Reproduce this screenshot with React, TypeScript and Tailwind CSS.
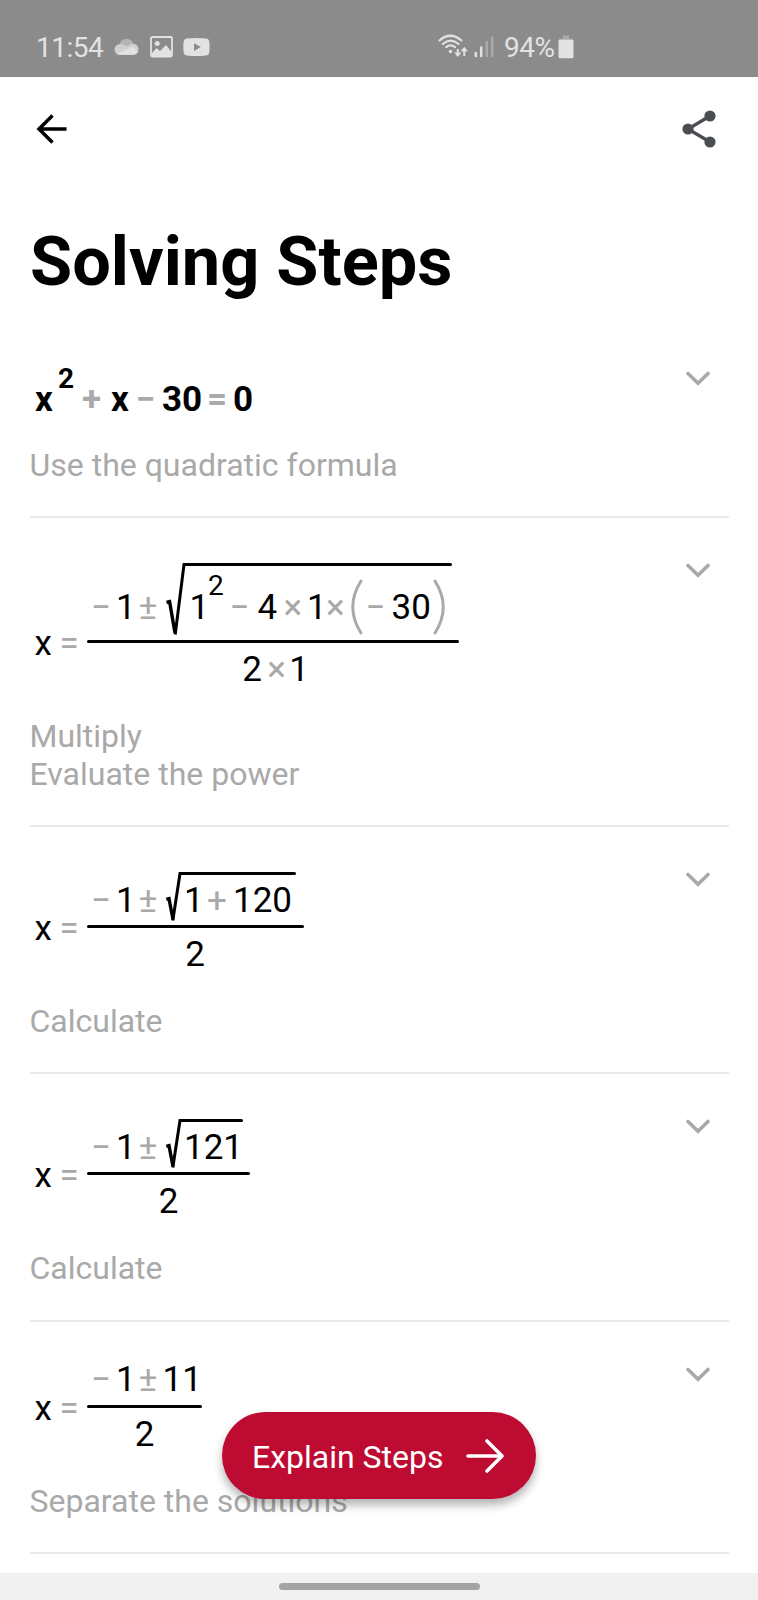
import React from 'react';

type SlotProps = { className?: string; children?: React.ReactNode };

// Number or variable
const Num: React.FC<SlotProps> = ({ className = '', children }) => (
  <span className={`shrink-0 whitespace-nowrap ${className}`}>{children}</span>
);

// Operator, drawn in grey
const Op: React.FC<SlotProps> = ({ className = '', children }) => (
  <span className={`shrink-0 whitespace-nowrap text-[#a9a9a9] ${className}`}>{children}</span>
);

const Chevron = () => (
  <svg className="mt-[9px] mr-[19px] h-4 w-6 shrink-0" viewBox="0 0 24 16" fill="none">
    <path d="M2 2.5L12 12.3L22 2.5" stroke="#a9a9a9" strokeWidth="3.6" strokeLinecap="round" />
  </svg>
);

const Root: React.FC<{ tall?: boolean; children: React.ReactNode }> = ({ tall, children }) => (
  <div className="flex">
    {tall ? (
      <svg className="h-[74px] w-[18px] shrink-0 overflow-visible" viewBox="0 0 18 74" fill="none" stroke="#000">
        <path d="M0.5 39.5L3.6 38.6L9 70" strokeWidth="3.4" />
        <path d="M9.2 71.5L18 1.5H20" strokeWidth="3" />
      </svg>
    ) : (
      <svg className="h-[50px] w-[14px] shrink-0 overflow-visible" viewBox="0 0 14 50" fill="none" stroke="#000">
        <path d="M0.3 27.3L3 26.6L7 47.5" strokeWidth="3.4" />
        <path d="M6.8 48.5L14 1.5H16" strokeWidth="3" />
      </svg>
    )}
    <div>
      <div className="h-[3px] rounded-r-full bg-black" />
      {children}
    </div>
  </div>
);

const Fraction: React.FC<{ className: string; top: React.ReactNode; bottom: React.ReactNode }> = ({
  className,
  top,
  bottom,
}) => (
  <div className="flex items-end">
    <div className="mb-[26px] flex pl-[4.5px]">
      <Num className="w-[25px]">x</Num>
      <Op className="w-[27.5px]">=</Op>
    </div>
    <div className={className}>
      {top}
      <div className="h-[3px] rounded-full bg-black" />
      <div className="mt-[6px] flex justify-center">{bottom}</div>
    </div>
  </div>
);

type StepProps = { formula: React.ReactNode; notes: string[]; className?: string };

const Step: React.FC<StepProps> = ({ formula, notes, className = 'pt-[36px] pb-[32.25px]' }) => (
  <section className={`border-b-2 border-[#e9e9e9] ${className}`}>
    <div className="flex items-start justify-between">
      <div className="text-[35px] leading-[41px] text-black">{formula}</div>
      <Chevron />
    </div>
    <div className="mt-[27px] -ml-[0.5px] text-[32px] leading-[38px] text-[#a9a9a9]">
      {notes.map((note) => (
        <p key={note}>{note}</p>
      ))}
    </div>
  </section>
);

const StatusBar = () => (
  <header className="flex h-[77px] items-start bg-[#8b8b8b] pt-[32px] text-[28px] leading-[32px] text-[#e2e2e2]">
    <span className="ml-[36px] w-[78px] tracking-[-0.5px]">11:54</span>
    <svg className="mt-[6px] h-[18px] w-[25px]" viewBox="0 0 25 18">
      <circle cx="12.5" cy="8" r="7.3" fill="#b5b5b5" />
      <path
        d="M6 6.3C9 6.3 10 7 12.5 8.5C15 7 17 5.8 19 5.8C22.5 6 24.5 8.5 24.5 11.5C24.5 14.5 22 16.8 19 16.8H6C3 16.8 .5 14.5 .5 11.5C.5 8.5 3 6.3 6 6.3Z"
        fill="#d0d0d0"
      />
      <path d="M3 15.8L19 8.5L24 14Q22 16.8 19 16.8H6Q4.3 16.8 3 15.8Z" fill="#e2e2e2" />
    </svg>
    <svg className="ml-[11px] mt-[4px] h-[22px] w-[23px]" viewBox="0 0 23 22">
      <rect x="1" y="1" width="21" height="19.5" rx="1.5" fill="none" stroke="#e2e2e2" strokeWidth="1.8" />
      <circle cx="7.2" cy="7.5" r="2.5" fill="#e2e2e2" />
      <path d="M2 17L6.5 12L10 15L16 9L21 15V20H2Z" fill="#e2e2e2" />
    </svg>
    <svg className="ml-[10px] mt-[6px] h-[19px] w-[27px]" viewBox="0 0 27 19">
      <path
        fillRule="evenodd"
        d="M4 .5Q13.5 -.5 23 .5Q26 .8 26.3 4Q26.8 9 26.3 14Q26 17.2 23 17.6Q13.5 18.6 4 17.6Q1 17.2 .6 14Q.1 9 .6 4Q1 .8 4 .5ZM11 5.2V13L17.8 9.1Z"
        fill="#e2e2e2"
      />
    </svg>
    <svg className="ml-[228px] mt-[2px] h-[24px] w-[30px]" viewBox="0 0 30 24" fill="none" stroke="#e2e2e2">
      <g strokeWidth="2.2" strokeLinecap="round">
        <path d="M1.5 6.5Q12 -3 23.5 6.5" />
        <path d="M4.8 10Q12.5 3.3 20.5 10" />
        <path d="M8.2 13.2Q12.5 9.7 17 13.2" />
      </g>
      <circle cx="12.5" cy="17.5" r="1.8" fill="#e2e2e2" stroke="none" />
      <path d="M19.8 15V20.5M26.3 15.5V22" strokeWidth="2" />
      <path d="M16.2 18.5H23.4L19.8 23ZM22.7 17.2H29.9L26.3 12.8Z" fill="#e2e2e2" stroke="none" />
    </svg>
    <svg className="ml-[6px] mt-[4px] h-[22px] w-[20px]" viewBox="0 0 20 22" strokeWidth="2.5" strokeLinecap="round">
      <path d="M1.8 17V20M7.2 11.5V20" stroke="#e2e2e2" />
      <path d="M12.8 6V20M18.2 1.5V20" stroke="#ababab" />
    </svg>
    <span className="ml-[10px] w-[54px] whitespace-nowrap tracking-[-0.5px]">94%</span>
    <svg className="mt-[3px] h-[24px] w-[16px]" viewBox="0 0 16 24">
      <path d="M5 0.5H11V3.5H15V6H1V3.5H5Z" fill="#ababab" />
      <rect x="0.5" y="4.8" width="15" height="18.5" rx="1.5" fill="#e2e2e2" />
    </svg>
  </header>
);

const minusOne = (
  <>
    <Op className="ml-[4px] w-[25px]">−</Op>
    <Num className="w-[22.5px]">1</Num>
  </>
);

export default function App() {
  return (
    <div className="relative flex h-[1600px] w-[758px] flex-col overflow-hidden bg-white font-['Roboto',sans-serif]">
      <StatusBar />

      <nav className="flex h-[104px] items-center justify-between pl-[36px] pr-[42px]">
        <svg className="h-8 w-8" viewBox="0 0 32 32" fill="none" stroke="#000" strokeWidth="3.5">
          <path d="M30.5 16H3M16.5 2.5L3 16L16.5 29.5" />
        </svg>
        <svg className="h-[38px] w-[34px]" viewBox="0 0 34 38" fill="#4a4d52">
          <path d="M28 6L6 19L28 32" fill="none" stroke="#4a4d52" strokeWidth="3.3" />
          <circle cx="28" cy="6" r="5.6" />
          <circle cx="6" cy="19" r="5.6" />
          <circle cx="28" cy="32" r="5.6" />
        </svg>
      </nav>

      <main className="flex-1 pl-[30px] pr-[29px]">
        <h1 className="mt-[40px] text-[68.5px] leading-[82px] font-bold text-black">Solving Steps</h1>

        <Step
          className="pt-[58.5px] pb-[32.25px]"
          notes={['Use the quadratic formula']}
          formula={
            <div className="-mb-px flex pt-[17px] pl-[5px] font-bold">
              <Num className="w-[23px]">x</Num>
              <Num className="-mt-[17px] w-[24px] text-[28px] leading-[33px]">2</Num>
              <Op className="w-[29px]">+</Op>
              <Num className="w-[25px]">x</Num>
              <Op className="w-[26px]">−</Op>
              <Num className="w-[45px]">30</Num>
              <Op className="w-[26px]">=</Op>
              <Num>0</Num>
            </div>
          }
        />

        <Step
          notes={['Multiply', 'Evaluate the power']}
          formula={
            <Fraction
              className="w-[372px]"
              top={
                <div className="flex h-[86px] items-start">
                  <div className="mt-[33.5px] flex">
                    {minusOne}
                    <Op className="w-[27.5px]">±</Op>
                  </div>
                  <div className="mt-[9.25px]">
                    <Root tall>
                      <div className="flex w-[267.5px] pt-[21px] pl-[5.5px]">
                        <Num className="w-[18.5px]">1</Num>
                        <Num className="-mt-[18px] w-[21.5px] text-[28px] leading-[33px]">2</Num>
                        <Op className="w-[28px]">−</Op>
                        <Num className="w-[26px]">4</Num>
                        <Op className="w-[23.5px]">×</Op>
                        <Num className="w-[19px]">1</Num>
                        <Op className="w-[24.5px]">×</Op>
                        <svg className="-mt-[8.5px] h-[56px] w-[12px] shrink-0" viewBox="0 0 12 56" fill="none">
                          <path d="M10 2Q-6.5 28 10 54" stroke="#a9a9a9" strokeWidth="3" strokeLinecap="round" />
                        </svg>
                        <Op className="ml-[3px] w-[26px]">−</Op>
                        <Num className="w-[41.5px]">30</Num>
                        <svg className="-mt-[8.5px] h-[56px] w-[12px] shrink-0" viewBox="0 0 12 56" fill="none">
                          <path d="M2 2Q18.5 28 2 54" stroke="#a9a9a9" strokeWidth="3" strokeLinecap="round" />
                        </svg>
                      </div>
                    </Root>
                  </div>
                </div>
              }
              bottom={
                <>
                  <Num className="ml-[5px] w-[25px]">2</Num>
                  <Op className="w-[22px]">×</Op>
                  <Num>1</Num>
                </>
              }
            />
          }
        />

        <Step
          notes={['Calculate']}
          formula={
            <Fraction
              className="w-[217px]"
              top={
                <div className="flex h-[62px] items-start">
                  <div className="mt-[16.5px] flex">
                    {minusOne}
                    <Op className="w-[27.5px]">±</Op>
                  </div>
                  <div className="mt-[9px]">
                    <Root>
                      <div className="flex w-[115.5px] pt-[4.5px] pl-[4px]">
                        <Num className="w-[23px]">1</Num>
                        <Op className="w-[26px]">+</Op>
                        <Num>120</Num>
                      </div>
                    </Root>
                  </div>
                </div>
              }
              bottom={<Num className="-ml-px">2</Num>}
            />
          }
        />

        <Step
          notes={['Calculate']}
          formula={
            <Fraction
              className="w-[163px]"
              top={
                <div className="flex h-[62px] items-start">
                  <div className="mt-[16.5px] flex">
                    {minusOne}
                    <Op className="w-[27.5px]">±</Op>
                  </div>
                  <div className="mt-[9px]">
                    <Root>
                      <div className="w-[62.5px] pt-[4.5px] pl-[4px]">
                        <Num>121</Num>
                      </div>
                    </Root>
                  </div>
                </div>
              }
              bottom={<Num>2</Num>}
            />
          }
        />

        <Step
          className="pt-[36px] pb-[32px]"
          notes={['Separate the solutions']}
          formula={
            <Fraction
              className="w-[115px]"
              top={
                <div className="flex h-[47px] items-start pt-[1.5px]">
                  {minusOne}
                  <Op className="w-[24px]">±</Op>
                  <Num>11</Num>
                </div>
              }
              bottom={<Num>2</Num>}
            />
          }
        />
      </main>

      {/* Floating action over the list */}
      <button className="absolute top-[1412px] left-[222px] flex h-[87px] w-[314px] items-center rounded-full bg-[#bd0b32] pl-[30px] text-[32px] text-white shadow-[0_6px_10px_rgba(0,0,0,0.3)]">
        <span className="mt-[2px] whitespace-nowrap">Explain Steps</span>
        <svg className="absolute right-[32px] h-[36px] w-[38px]" viewBox="0 0 38 36" fill="none">
          <path
            d="M2 18H36M21 3L36 18L21 33"
            stroke="#fff"
            strokeWidth="3.6"
            strokeLinecap="round"
            strokeLinejoin="round"
          />
        </svg>
      </button>

      <footer className="absolute inset-x-0 bottom-0 flex h-[27px] justify-center bg-[#f1f1f1] pt-[10px]">
        <div className="h-[7px] w-[201px] rounded-full bg-[#a4a4a4]" />
      </footer>
    </div>
  );
}
